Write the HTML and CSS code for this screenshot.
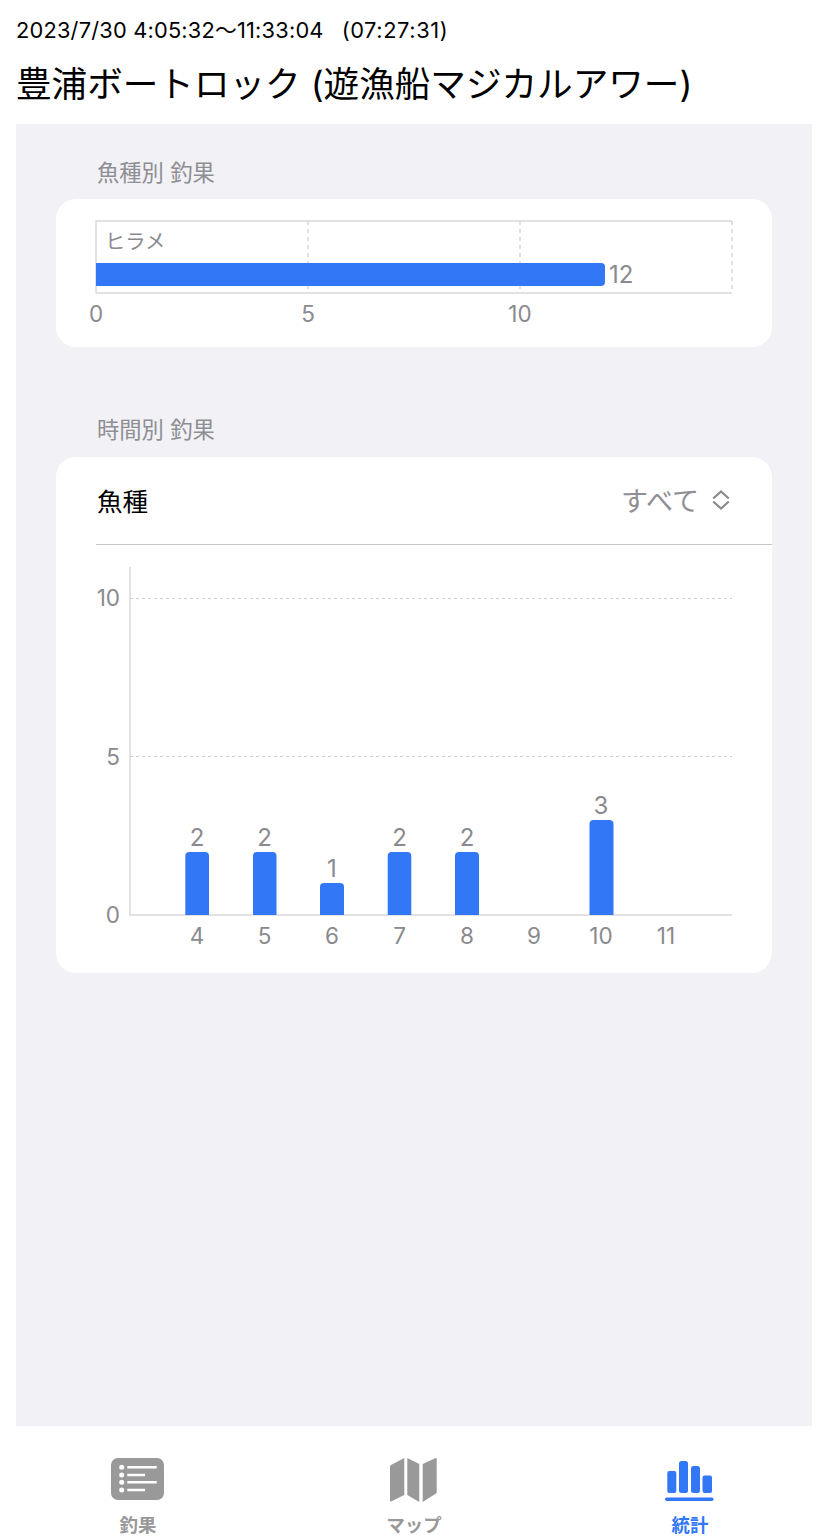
FILE: index.html
```html
<!DOCTYPE html>
<html lang="ja">
<head>
<meta charset="utf-8">
<title>統計</title>
<link rel="stylesheet" href="styles.css">
</head>
<body>
<div class="app">
  <header class="header">
    <div class="time"><span>2023/7/30 4:05:32〜11:33:04</span><span class="duration">(07:27:31)</span></div>
    <h1 class="title">豊浦ボートロック (遊漁船マジカルアワー)</h1>
  </header>
  <main class="panel">
    <h2 class="section-label first">魚種別 釣果</h2>
    <section class="card card-species">
      <svg class="chart" width="716" height="148" viewBox="0 0 716 148">
        <path class="grid-v" d="M252 22V94M464 22V94M676 22V94"/>
        <path class="axis" d="M40 94V22H676M40 94H676"/>
        <text class="lbl" x="49" y="50">ヒラメ</text>
        <path class="bar" d="M40 64H545a4 4 0 0 1 4 4V83a4 4 0 0 1-4 4H40Z"/>
        <text class="val" x="553" y="84">12</text>
        <text class="tick mid" x="40" y="123">0</text>
        <text class="tick mid" x="252" y="123">5</text>
        <text class="tick mid" x="464" y="123">10</text>
      </svg>
    </section>
    <h2 class="section-label second">時間別 釣果</h2>
    <section class="card card-time">
      <div class="row">
        <span class="row-name">魚種</span>
        <span class="row-value">すべて
          <svg class="updown" width="18" height="20" viewBox="0 0 18 20"><path d="M1.200 8.500 9 1.500l7.800 7M1.200 11.500 9 18.500l7.800-7"/></svg>
        </span>
      </div>
      <svg class="chart" width="716" height="428" viewBox="0 0 716 428">
        <path class="grid-h" d="M74 53.500H676M74 211.500H676"/>
        <path class="axis" d="M74 22V370H676"/>
        <text class="tick end" x="64" y="61">10</text>
        <text class="tick end" x="64" y="220">5</text>
        <text class="tick end" x="64" y="378">0</text>
        <path class="bar" d="M129.300 370V311a4 4 0 0 1 4-4H149a4 4 0 0 1 4 4V370Z"/>
        <path class="bar" d="M197 370V311a4 4 0 0 1 4-4H216.500a4 4 0 0 1 4 4V370Z"/>
        <path class="bar" d="M264 370V342a4 4 0 0 1 4-4H284a4 4 0 0 1 4 4V370Z"/>
        <path class="bar" d="M331.700 370V311a4 4 0 0 1 4-4H351.300a4 4 0 0 1 4 4V370Z"/>
        <path class="bar" d="M399 370V311a4 4 0 0 1 4-4H419a4 4 0 0 1 4 4V370Z"/>
        <path class="bar" d="M533.500 370V279a4 4 0 0 1 4-4H553.500a4 4 0 0 1 4 4V370Z"/>
        <text class="val mid" x="141" y="301">2</text>
        <text class="val mid" x="208.500" y="301">2</text>
        <text class="val mid" x="276" y="332">1</text>
        <text class="val mid" x="343.500" y="301">2</text>
        <text class="val mid" x="411" y="301">2</text>
        <text class="val mid" x="545" y="269">3</text>
        <text class="tick mid" x="141" y="399">4</text>
        <text class="tick mid" x="208.500" y="399">5</text>
        <text class="tick mid" x="276" y="399">6</text>
        <text class="tick mid" x="343.500" y="399">7</text>
        <text class="tick mid" x="411" y="399">8</text>
        <text class="tick mid" x="478" y="399">9</text>
        <text class="tick mid" x="545" y="399">10</text>
        <text class="tick mid" x="610" y="399">11</text>
      </svg>
    </section>
  </main>
  <nav class="tabs">
    <a class="tab">
      <svg width="54" height="44" viewBox="0 0 54 44">
        <rect class="fill-gray" x="0" y="0" width="53" height="42" rx="7"/>
        <path class="list-lines" d="M16.300 9.300H45.700M16.300 17H34M16.300 24.300H45.700M16.300 32H34"/>
        <g class="list-dots">
          <circle cx="10.700" cy="9.300" r="2.500"/><circle cx="10.700" cy="17" r="2.500"/><circle cx="10.700" cy="24.300" r="2.500"/><circle cx="10.700" cy="32" r="2.500"/>
        </g>
      </svg>
      <span class="tab-label">釣果</span>
    </a>
    <a class="tab">
      <svg width="50" height="46" viewBox="0 0 50 46">
        <path class="fill-gray" d="M1 10Q1 8.500 2 8L15.300 1V38L2 44.500Q1 45 1 43.500ZM18.300 1 30.300 7V45L18.300 38ZM33.700 7 46.700 1Q47.700 0.700 47.700 2V35Q47.700 36 47 36.500L33.700 45Z"/>
      </svg>
      <span class="tab-label">マップ</span>
    </a>
    <a class="tab active">
      <svg width="50" height="44" viewBox="0 0 50 44">
        <rect class="fill-blue" x="2.300" y="13" width="9" height="22" rx="2"/>
        <rect class="fill-blue" x="14" y="3" width="9" height="32" rx="2.500"/>
        <rect class="fill-blue" x="26" y="8" width="9" height="27" rx="2.500"/>
        <rect class="fill-blue" x="37.500" y="17.600" width="9.500" height="17.400" rx="2"/>
        <rect class="fill-blue" x="0" y="39.600" width="48.500" height="3.400" rx="1.700"/>
      </svg>
      <span class="tab-label">統計</span>
    </a>
  </nav>
</div>
</body>
</html>
```
FILE: styles.css
```css
* { box-sizing: border-box; }
html, body { margin: 0; padding: 0; background: #fff; }
body {
  width: 828px;
  height: 1540px;
  overflow: hidden;
  font-family: Inter, "Noto Sans CJK JP", "Noto Sans", sans-serif;
  color: #000;
}
.app { display: flex; flex-direction: column; height: 1540px; }
.header { height: 124px; padding: 17px 16px 0 16px; }
.time {
  display: flex;
  gap: 18px;
  font-size: 21.800px;
  line-height: 26px;
  letter-spacing: 0.200px;
}
.duration { letter-spacing: 0.600px; }
.title {
  margin: 20px 0 0;
  font-size: 35.600px;
  line-height: 44px;
  font-weight: 400;
  white-space: nowrap;
  letter-spacing: 0;
}
.panel {
  height: 1302px;
  margin: 0 16px;
  padding: 0 40px;
  background: #f1f1f6;
}
.section-label {
  margin: 0;
  padding-left: 41px;
  font-size: 22.300px;
  line-height: 28px;
  font-weight: 400;
  color: #8e8e93;
}
.section-label.first { padding-top: 35px; height: 75px; }
.section-label.second { padding-top: 69px; height: 110px; }
.card {
  width: 716px;
  background: #fff;
  border-radius: 20px;
  overflow: hidden;
}
.card-species { height: 148px; }
.card-time { height: 516px; }
.chart { display: block; }
.row {
  display: flex;
  align-items: center;
  justify-content: space-between;
  height: 88px;
  margin-left: 40px;
  padding: 0 42px 2px 1px;
  border-bottom: 1px solid #c6c6c8;
}
.row-name { font-size: 25.500px; }
.row-value {
  display: flex;
  align-items: center;
  gap: 13px;
  font-size: 27px;
  color: #8e8e93;
}
.updown { fill: none; stroke: #8a8a8e; stroke-width: 2.200; }
.axis { fill: none; stroke: #d9d9dc; stroke-width: 1.500; }
.grid-v { fill: none; stroke: #d4d4dc; stroke-width: 1.500; stroke-dasharray: 4 4; }
.grid-h { fill: none; stroke: #cfcfd4; stroke-width: 1; stroke-dasharray: 3 3; }
.bar { fill: #3277f6; }
.lbl, .val, .tick {
  font-family: Inter, "Noto Sans CJK JP", sans-serif;
  fill: #8a8a8e;
}
.val { font-size: 24px; }
.tick { font-size: 22.500px; }
.lbl { font-size: 20.300px; }
.mid { text-anchor: middle; }
.end { text-anchor: end; }
.tabs {
  flex: 1;
  display: grid;
  grid-template-columns: repeat(3, 276px);
}
.tab {
  display: flex;
  flex-direction: column;
  align-items: center;
  padding-top: 31px;
  color: #999;
}
.tab svg { display: block; height: 46px; }
.tab-label {
  margin-top: 10px;
  font-size: 18.400px;
  line-height: 24px;
  font-weight: 700;
}
.tab.active { color: #3277f6; }
.fill-gray { fill: #999; }
.fill-blue { fill: #3277f6; }
.list-lines { fill: none; stroke: #fff; stroke-width: 2.500; }
.list-dots { fill: #fff; }
```
